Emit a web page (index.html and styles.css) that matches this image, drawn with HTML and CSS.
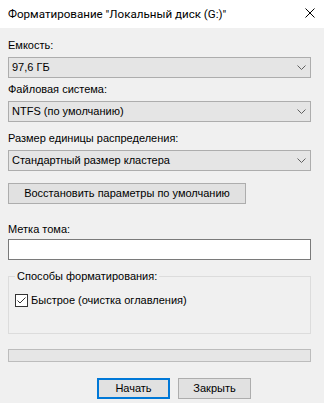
FILE: index.html
```html
<!DOCTYPE html>
<html lang="ru">
<head>
<meta charset="utf-8">
<link rel="stylesheet" href="styles.css">
</head>
<body>
<div class="window">
  <div class="titlebar">
    <span class="title">Форматирование "Локальный диск (G:)"</span>
    <svg class="close" width="10" height="10" viewBox="0 0 10 10"><path d="M0.5 0.5L9.5 9.5M9.5 0.5L0.5 9.5" stroke="#000" stroke-width="1" fill="none"/></svg>
  </div>
  <div class="content">
    <div class="field f1">
      <div class="lbl">Емкость:</div>
      <div class="combo"><span>97,6 ГБ</span><svg class="chev" width="9" height="5" viewBox="0 0 9 5"><path d="M0.5 0.5L4.5 4.5L8.5 0.5" stroke="#606060" stroke-width="1" fill="none"/></svg></div>
    </div>
    <div class="field f2">
      <div class="lbl">Файловая система:</div>
      <div class="combo"><span>NTFS (по умолчанию)</span><svg class="chev" width="9" height="5" viewBox="0 0 9 5"><path d="M0.5 0.5L4.5 4.5L8.5 0.5" stroke="#606060" stroke-width="1" fill="none"/></svg></div>
    </div>
    <div class="field f3">
      <div class="lbl">Размер единицы распределения:</div>
      <div class="combo"><span>Стандартный размер кластера</span><svg class="chev" width="9" height="5" viewBox="0 0 9 5"><path d="M0.5 0.5L4.5 4.5L8.5 0.5" stroke="#606060" stroke-width="1" fill="none"/></svg></div>
    </div>
    <div class="btn restore">Восстановить параметры по умолчанию</div>
    <div class="field f4">
      <div class="lbl lbl-tight">Метка тома:</div>
      <div class="textbox"></div>
    </div>
    <fieldset class="group">
      <legend class="legend">Способы форматирования:</legend>
      <div class="check-row">
        <svg class="checkbox" width="13" height="13" viewBox="0 0 13 13"><rect x="0.5" y="0.5" width="12" height="12" fill="#fff" stroke="#333"/><path d="M2.5 6.5L5 9L10.5 3.5" stroke="#333" stroke-width="1" fill="none"/></svg>
        <span>Быстрое (очистка оглавления)</span>
      </div>
    </fieldset>
    <div class="progress"></div>
    <div class="actions">
      <div class="btn action primary">Начать</div>
      <div class="btn action">Закрыть</div>
    </div>
  </div>
</div>
</body>
</html>
```
FILE: styles.css
```css
html, body {
  margin: 0;
  padding: 0;
}
body {
  width: 324px;
  height: 403px;
  overflow: hidden;
  background: #f0f0f0;
  font-family: "Liberation Sans", Arial, sans-serif;
  font-size: 11px;
  line-height: 15px;
  color: #000;
}
.window {
  display: flex;
  flex-direction: column;
}
.titlebar {
  height: 28px;
  background: #fff;
  display: flex;
  align-items: center;
  padding: 0 9px 0 8px;
  font-family: Roboto, "Noto Sans", sans-serif;
  font-size: 11.6px;
}
.title {
  flex: 1;
  padding-top: 1px;
}
.close {
  display: block;
  margin-bottom: 2px;
}
.content {
  display: flex;
  flex-direction: column;
  padding: 10px 13px 0 8px;
}
.lbl {
  margin-bottom: 4px;
}
.lbl-tight {
  margin-bottom: 2px;
}
.f2 { margin-top: 4px; }
.f3 { margin-top: 9px; }
.f4 { margin-top: 18px; }
.combo {
  box-sizing: border-box;
  height: 21px;
  background: #e5e5e5;
  border: 1px solid #adadad;
  display: flex;
  align-items: center;
  justify-content: space-between;
  padding: 0 4px 0 3px;
}
.chev {
  display: block;
}
.btn {
  box-sizing: border-box;
  height: 21px;
  background: #e1e1e1;
  border: 1px solid #adadad;
  display: flex;
  align-items: center;
  justify-content: center;
}
.restore {
  margin-top: 12px;
  width: 238px;
}
.textbox {
  box-sizing: border-box;
  height: 21px;
  background: #fff;
  border: 1px solid #7a7a7a;
}
.group {
  margin: 9px 0 0 0;
  border: 1px solid #dcdcdc;
  padding: 9px 6px 25px 6px;
  min-width: 0;
}
.legend {
  padding: 0 2px;
  line-height: 15px;
}
.check-row {
  display: flex;
  align-items: center;
  height: 15px;
  gap: 3px;
}
.checkbox {
  display: block;
}
.progress {
  box-sizing: border-box;
  margin-top: 15px;
  height: 13px;
  background: #e6e6e6;
  border: 1px solid #bcbcbc;
}
.actions {
  margin-top: 16px;
  display: flex;
  gap: 8px;
  padding-left: 89px;
}
.action {
  width: 73px;
}
.primary {
  border: 2px solid #0078d7;
}
```
